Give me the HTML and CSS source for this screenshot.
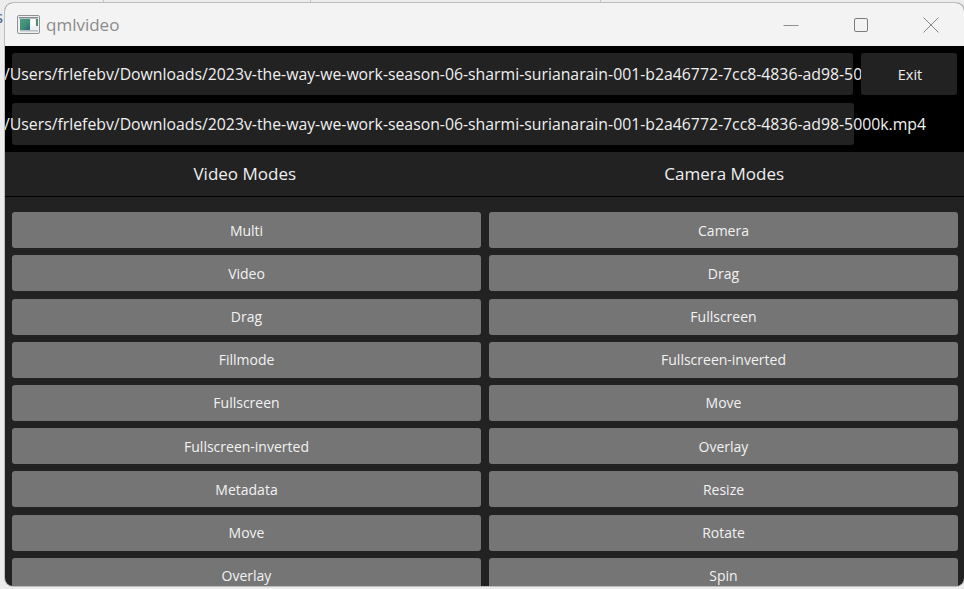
FILE: index.html
```html
<!DOCTYPE html>
<html lang="en">
<head>
<meta charset="utf-8">
<title>qmlvideo</title>
<link rel="stylesheet" href="styles.css">
</head>
<body>
<span class="behind-letter">s</span>
<i class="tick tick-a"></i><i class="tick tick-b"></i><i class="tick tick-c"></i>
<main class="window">
  <header class="titlebar">
    <div class="title-left">
      <svg class="app-icon" width="23" height="19" viewBox="0 0 23 19">
        <defs><linearGradient id="g" x1="0" y1="0" x2="1" y2="1"><stop offset="0" stop-color="#4f9a8c"/><stop offset="0.55" stop-color="#3f8f70"/><stop offset="1" stop-color="#2f5f95"/></linearGradient></defs>
        <rect x="0.5" y="0.5" width="22" height="18" rx="1.5" fill="#eef0f0" stroke="#8d9296"/>
        <rect x="2" y="2" width="19" height="1.5" fill="#7f8a92"/>
        <rect x="3" y="4" width="10" height="11" fill="url(#g)"/>
        <rect x="3" y="15" width="18" height="1.5" fill="#b9bec2"/>
        <rect x="14" y="4" width="4" height="7" fill="#fafafa"/>
        <rect x="19" y="4" width="2" height="7" fill="#4f8f70"/>
      </svg>
      <span class="title-text">qmlvideo</span>
    </div>
    <div class="controls">
      <svg class="ctl" width="16" height="16" viewBox="0 0 16 16"><path d="M0.5 8.5H15.5" stroke="#8f8f8f" fill="none"/></svg>
      <svg class="ctl" width="16" height="16" viewBox="0 0 16 16"><rect x="1.5" y="1.5" width="13" height="13" rx="1.5" stroke="#7c7c7c" fill="none"/></svg>
      <svg class="ctl" width="16" height="16" viewBox="0 0 16 16"><path d="M0.5 0.5L15.5 15.5M15.5 0.5L0.5 15.5" stroke="#8a8a8a" fill="none"/></svg>
    </div>
  </header>

  <section class="paths">
    <div class="path-row">
      <div class="field">
        <div class="path-clip">
          <span class="path-text">/Users/frlefebv/Downloads/2023v-the-way-we-work-season-06-sharmi-surianarain-001-b2a46772-7cc8-4836-ad98-5000k.mp4</span>
        </div>
      </div>
      <button class="exit">Exit</button>
    </div>
    <div class="path-row">
      <div class="field">
        <span class="path-text">/Users/frlefebv/Downloads/2023v-the-way-we-work-season-06-sharmi-surianarain-001-b2a46772-7cc8-4836-ad98-5000k.mp4</span>
      </div>
    </div>
  </section>

  <nav class="tabs">
    <div class="tab">Video Modes</div>
    <div class="tab">Camera Modes</div>
  </nav>

  <section class="modes">
    <button class="mode">Multi</button><button class="mode">Camera</button>
    <button class="mode">Video</button><button class="mode">Drag</button>
    <button class="mode">Drag</button><button class="mode">Fullscreen</button>
    <button class="mode">Fillmode</button><button class="mode">Fullscreen-inverted</button>
    <button class="mode">Fullscreen</button><button class="mode">Move</button>
    <button class="mode">Fullscreen-inverted</button><button class="mode">Overlay</button>
    <button class="mode">Metadata</button><button class="mode">Resize</button>
    <button class="mode">Move</button><button class="mode">Rotate</button>
    <button class="mode">Overlay</button><button class="mode">Spin</button>
  </section>
</main>
</body>
</html>
```
FILE: styles.css
```css
* { box-sizing: border-box; }
html, body { height: 100%; }
body {
  margin: 0;
  padding: 3px 0 3px 5px;
  background: #ececec;
  overflow: hidden;
  font-family: "Open Sans", "Noto Sans", sans-serif;
}
.behind-letter {
  position: absolute;
  left: -5px;
  top: 5px;
  font-size: 17px;
  color: #4a5f85;
}
.tick {
  position: absolute;
  top: 0;
  width: 1px;
  height: 3px;
  background: #c8c8c8;
}
.tick-a { left: 103px; }
.tick-b { left: 310px; }
.tick-c { left: 600px; }
.window {
  position: relative;
  height: 583px;
  display: flex;
  flex-direction: column;
  background: #222;
  border-radius: 8px;
  overflow: hidden;
  box-shadow: 0 0 0 1px #bdbdbd;
}
.titlebar {
  flex: 0 0 43px;
  background: #f3f3f3;
  display: flex;
  align-items: center;
  justify-content: space-between;
}
.title-left { display: flex; align-items: center; padding-left: 12px; }
.app-icon { margin-right: 6px; }
.title-text { font-size: 17px; line-height: 23px; color: #8b8b8b; margin-top: -1px; }
.controls { display: flex; gap: 54px; padding-right: 25px; }
.paths {
  flex: 0 0 106px;
  background: #000;
  padding: 7px 7px 0;
  display: flex;
  flex-direction: column;
  gap: 8px;
}
.path-row { display: flex; gap: 8px; height: 42px; }
.field {
  width: 842px;
  height: 42px;
  background: #222;
  border-radius: 3px;
  position: relative;
}
.path-clip {
  position: absolute;
  left: -7px;
  top: 0;
  width: 857px;
  height: 42px;
  overflow: hidden;
}
.path-text {
  position: absolute;
  left: -8px;
  top: 0;
  line-height: 42px;
  font-size: 15.8px;
  color: #f0f0f0;
  white-space: nowrap;
}
.path-clip .path-text { left: -1px; }
.exit {
  width: 96px;
  height: 42px;
  background: #222;
  border: 0;
  border-radius: 3px;
  color: #ececec;
  font: 14.5px "Open Sans", sans-serif;
  padding: 0 0 0 2px;
  position: relative;
}
.tabs {
  flex: 0 0 45px;
  display: flex;
  background: #222;
  border-bottom: 1px solid #000;
}
.tab {
  flex: 1;
  text-align: center;
  line-height: 44px;
  font-size: 17px;
  color: #efefef;
}
.modes {
  display: grid;
  grid-template-columns: 469px 469px;
  grid-auto-rows: 36px;
  gap: 7.2px 8px;
  padding: 15.2px 7px 0;
}
.mode {
  background: #757575;
  border: 0;
  border-radius: 3px;
  color: #f2f2f2;
  font: 14px "Open Sans", sans-serif;
  padding: 0;
}
```
